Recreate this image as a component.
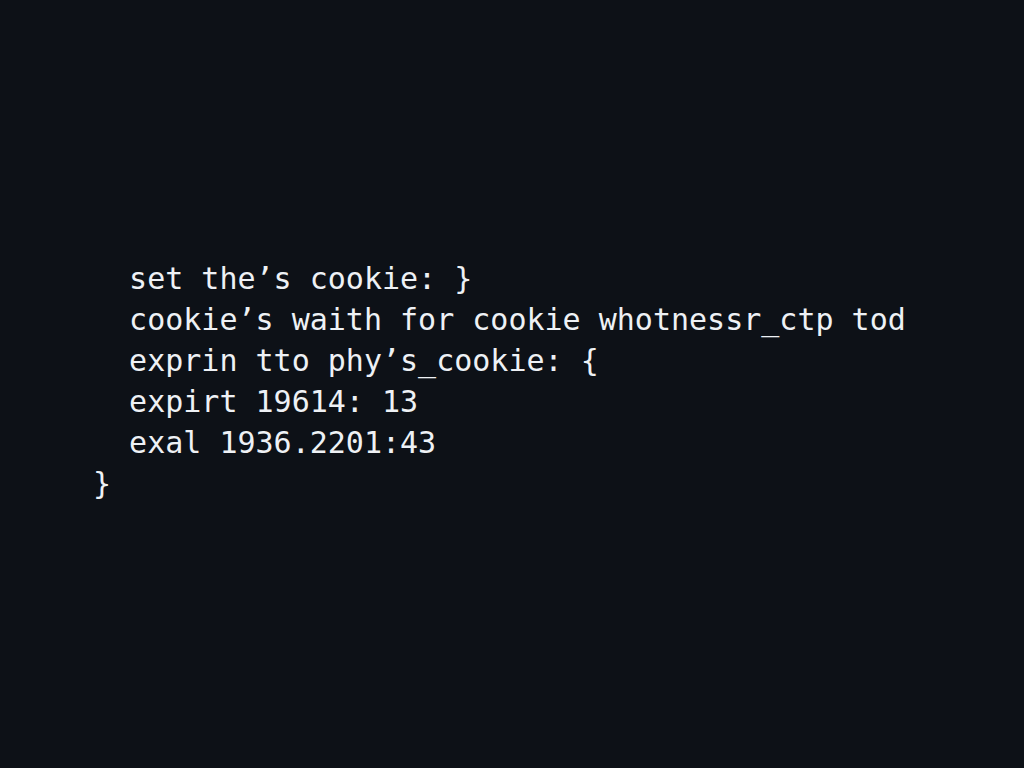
const lines = [
  "  set the’s cookie: }",
  "  cookie’s waith for cookie whotnessr_ctp tod",
  "  exprin tto phy’s_cookie: {",
  "  expirt 19614: 13",
  "  exal 1936.2201:43",
  "}",
]

export default function App() {
  return (
    <div className="min-h-[768px] w-full bg-[#0d1117] pl-[93px] pt-[258px]">
      <pre className="font-['DejaVu_Sans_Mono',monospace] text-[30px] leading-[41px] text-[#eef1f5]">
        {lines.join('\n')}
      </pre>
    </div>
  )
}
